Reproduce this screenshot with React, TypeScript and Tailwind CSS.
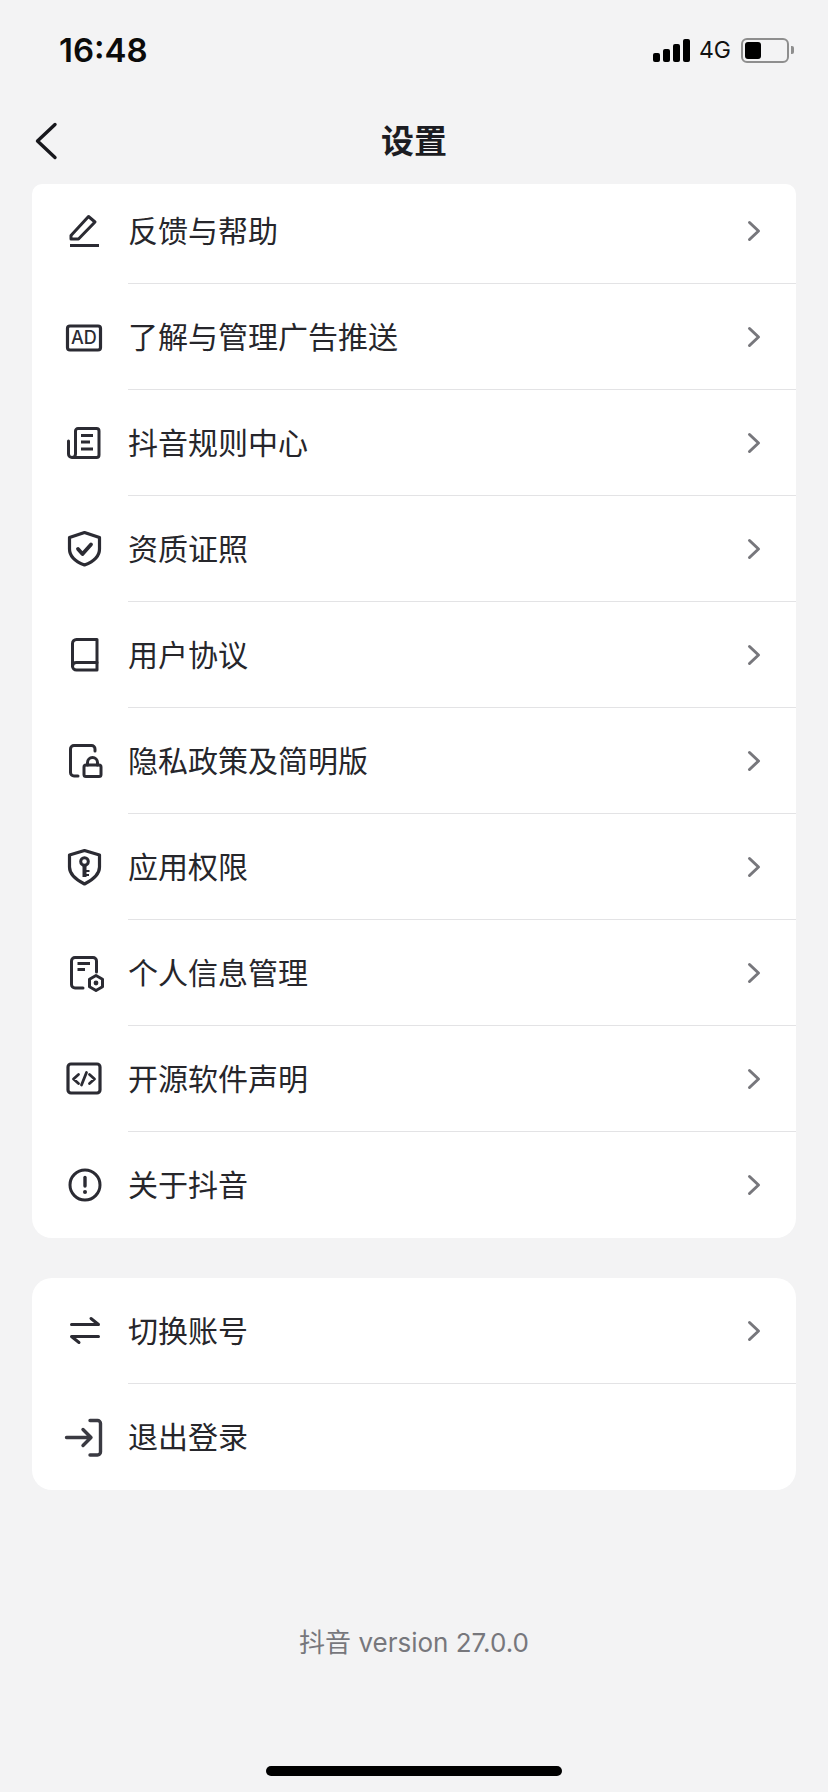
import type { ReactNode } from "react";

// each icon is drawn in a 40x40 box
function Glyph({ children }: { children: ReactNode }) {
  return (
    <svg
      width={40}
      height={40}
      viewBox="0 0 40 40"
      fill="none"
      stroke="#2b2b33"
      strokeWidth={3}
      strokeLinecap="round"
      strokeLinejoin="round"
      className="shrink-0 overflow-visible"
    >
      {children}
    </svg>
  );
}

const icons = {
  pencil: (
    <>
      <path d="M7 28V24.5L24.5 5.5L31 11L14.5 28H7Z" />
      <path d="M6 34.5H35" strokeWidth={3.2} strokeLinecap="butt" />
    </>
  ),
  ad: (
    <>
      <rect x="3.5" y="9" width="33" height="24" rx="2.5" strokeWidth={3.2} />
      <text x="20" y="27.2" textAnchor="middle" fontSize="18" fontFamily="Inter, sans-serif" fontWeight="500" fill="#2b2b33" stroke="none">
        AD
      </text>
    </>
  ),
  rules: (
    <>
      <path d="M4.5 18V31A3.5 3.5 0 0 0 8 34.5H32.5A2.5 2.5 0 0 0 35 32V8A2.5 2.5 0 0 0 32.5 5.5H14A2.5 2.5 0 0 0 11.5 8V31A3.5 3.5 0 0 1 8 34.5" />
      <path d="M17 12.5H29M17 19H26M17 26H29" strokeLinecap="butt" />
    </>
  ),
  shieldCheck: (
    <>
      <path d="M20.5 3.5L35.5 8.5V20C35.5 28 28.5 33 20.5 36C12.5 33 5.5 28 5.5 20V8.5Z" strokeWidth={3.2} />
      <path d="M14 20L18.5 25L27 15.5" strokeWidth={3.8} />
    </>
  ),
  book: (
    <>
      <path d="M33 4.5H12.5A4 4 0 0 0 8.5 8.5V31A4 4 0 0 0 12.5 35H33Z" />
      <path d="M8.5 31A4 4 0 0 1 12.5 27.5H33" />
    </>
  ),
  lockDoc: (
    <>
      <path d="M14 35H10A3.5 3.5 0 0 1 6.5 31.5V8A3.5 3.5 0 0 1 10 4.5H27.5A3.5 3.5 0 0 1 31 8V10" />
      <rect x="20" y="24" width="17" height="11.5" rx="2" />
      <path d="M23.5 24V21.5A5 5 0 0 1 33.5 21.5V24" />
    </>
  ),
  shieldKey: (
    <>
      <path d="M20.5 3.5L35.5 8V20C35.5 28 28.5 33 20.5 37C12.5 33 5.5 28 5.5 20V8Z" strokeWidth={3.2} />
      <circle cx="20.5" cy="14.5" r="3.8" />
      <path d="M20.5 18.5V30" strokeWidth={4} strokeLinecap="butt" />
      <path d="M21.5 24H25.5M21.5 28H25" strokeWidth={2.2} strokeLinecap="butt" />
    </>
  ),
  personDoc: (
    <>
      <path d="M19 35H11A3.5 3.5 0 0 1 7.5 31.5V8A3.5 3.5 0 0 1 11 4.5H29A3.5 3.5 0 0 1 32.5 8V19" />
      <path d="M13.5 10.5H26M13.5 16.5H21" strokeLinecap="butt" />
      <path d="M32 22.5L38.5 26.2V33.8L32 37.5L25.5 33.8V26.2Z" />
      <circle cx="32" cy="30" r="2.4" fill="#2b2b33" stroke="none" />
    </>
  ),
  code: (
    <>
      <rect x="4" y="5" width="32" height="29" rx="3" strokeWidth={3.2} />
      <path d="M14.5 15.5L9.5 20L14.5 24.5M25.5 15.5L30.5 20L25.5 24.5M22.5 13.5L17.5 26" strokeWidth={2.8} />
    </>
  ),
  info: (
    <>
      <circle cx="21" cy="20" r="15" />
      <path d="M21 12.5V21" strokeWidth={3.4} />
      <circle cx="21" cy="27" r="2" fill="#2b2b33" stroke="none" />
    </>
  ),
  swap: <path d="M7.5 13.5H34.5L27 7.5M34.5 25.5H7.5L15 31.5" />,
  logout: (
    <g stroke="#3a3a42" strokeWidth={3.4}>
      <path d="M26 3.5H33.5A3 3 0 0 1 36.5 6.5V35A3 3 0 0 1 33.5 38H26" />
      <path d="M2.5 20.5H27M19 12.5L27 20.5L19 28.5" />
    </g>
  ),
};

const mainRows = [
  { label: "反馈与帮助", icon: icons.pencil },
  { label: "了解与管理广告推送", icon: icons.ad },
  { label: "抖音规则中心", icon: icons.rules },
  { label: "资质证照", icon: icons.shieldCheck },
  { label: "用户协议", icon: icons.book },
  { label: "隐私政策及简明版", icon: icons.lockDoc },
  { label: "应用权限", icon: icons.shieldKey },
  { label: "个人信息管理", icon: icons.personDoc },
  { label: "开源软件声明", icon: icons.code },
  { label: "关于抖音", icon: icons.info },
];

function Row({
  label,
  icon,
  first,
  last,
  arrow = true,
}: {
  label: string;
  icon: ReactNode;
  first?: boolean;
  last?: boolean;
  arrow?: boolean;
}) {
  return (
    <div className={first ? "flex h-[100px] pl-[32px]" : "flex h-[106px] pl-[32px]"}>
      <div className={first ? "flex items-center pb-[6px]" : "flex items-center"}>{icon}</div>
      <div
        className={
          (last ? "" : "border-b border-[#e3e3e5] ") +
          (first ? "pb-[6px] " : "") +
          "ml-[24px] flex flex-1 items-center justify-between pr-[35px]"
        }
      >
        <span className="text-[30px] leading-[40px] text-[#26262b]">{label}</span>
        {arrow && (
          <svg width={14} height={22} viewBox="0 0 14 22" fill="none" stroke="#77777c" strokeWidth={3} strokeLinecap="round" strokeLinejoin="round">
            <path d="M2.5 2.5L11.5 11L2.5 19.5" />
          </svg>
        )}
      </div>
    </div>
  );
}

export default function App() {
  return (
    <div className="flex h-[1792px] w-[828px] flex-col overflow-hidden bg-[#f3f3f4] font-['Inter','Noto_Sans_CJK_SC',sans-serif]">
      {/* status bar */}
      <div className="flex h-[100px] items-center justify-between pl-[59px] pr-[34px]">
        <span className="text-[33px] font-semibold leading-none text-[#0b0b0b]">16:48</span>
        <div className="flex items-center">
          <div className="flex items-end gap-[3px]">
            <div className="h-[9px] w-[7px] rounded-[2px] bg-black" />
            <div className="h-[13px] w-[7px] rounded-[2px] bg-black" />
            <div className="h-[18px] w-[7px] rounded-[2px] bg-black" />
            <div className="h-[23px] w-[7px] rounded-[2px] bg-black" />
          </div>
          <span className="ml-[9px] text-[23px] leading-none text-[#111]">4G</span>
          <div className="ml-[10px] flex h-[25px] w-[48px] items-center rounded-[6px] border-2 border-[#8e8e8e] px-[2px]">
            <div className="h-[17px] w-[16px] rounded-[3px] bg-black" />
          </div>
          <div className="ml-[2px] h-[8px] w-[3px] rounded-r-[2px] bg-[#8e8e8e]" />
        </div>
      </div>

      {/* nav */}
      <div className="grid h-[84px] grid-cols-3 items-center">
        <svg width={24} height={38} viewBox="0 0 24 38" fill="none" stroke="#17171c" strokeWidth={3.4} strokeLinecap="round" strokeLinejoin="round" className="ml-[34px] -mt-[2px]">
          <path d="M21 2.5L3.5 19L21 35.5" />
        </svg>
        <h1 className="-mt-[2px] text-center text-[33px] font-bold leading-[44px] text-[#1c1c22]">设置</h1>
      </div>

      {/* main list */}
      <div className="mx-[32px] overflow-hidden rounded-b-[20px] rounded-t-[10px] bg-white">
        {mainRows.map((row, i) => (
          <Row key={row.label} label={row.label} icon={<Glyph>{row.icon}</Glyph>} first={i === 0} last={i === mainRows.length - 1} />
        ))}
      </div>

      {/* account list */}
      <div className="mx-[32px] mt-[40px] overflow-hidden rounded-[20px] bg-white">
        <Row label="切换账号" icon={<Glyph>{icons.swap}</Glyph>} />
        <Row label="退出登录" icon={<Glyph>{icons.logout}</Glyph>} last arrow={false} />
      </div>

      <p className="mt-[133px] text-center text-[26px] leading-[40px] text-[#77777c]">抖音 version 27.0.0</p>

      <div className="mx-auto mb-[16px] mt-auto h-[10px] w-[296px] rounded-full bg-black" />
    </div>
  );
}
